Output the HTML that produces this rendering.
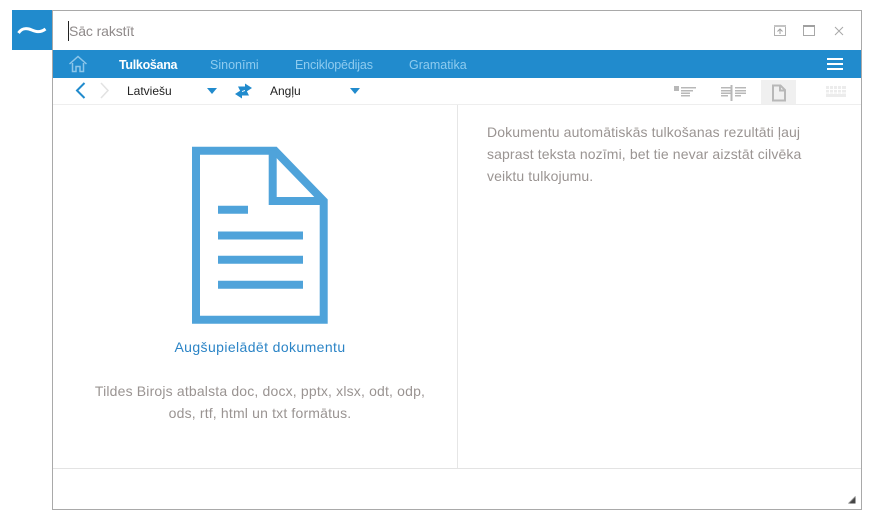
<!DOCTYPE html>
<html>
<head>
<meta charset="utf-8">
<style>
html,body{margin:0;padding:0;background:#fff;}
body{width:884px;height:528px;position:relative;overflow:hidden;font-family:"Liberation Sans",sans-serif;}
.a{position:absolute;white-space:nowrap;}
</style>
</head>
<body>
<div class="a" style="left:12px;top:10px;width:40px;height:40px;background:#218bcd;"></div>
<svg class="a" style="left:12px;top:10px;" width="40" height="40"><path d="M6.500 23C9.500 18.500 13 18 17 19C21 20 26 24.500 33.500 19" fill="none" stroke="#fff" stroke-width="3"/></svg>
<div class="a" style="left:52px;top:10px;width:808px;height:498px;border:1px solid #a9a9a9;"></div>
<div class="a" style="left:68px;top:21px;width:1px;height:20px;background:#222;"></div>
<div class="a" style="left:69px;top:22px;font-size:14px;line-height:18px;color:#8f8a8a;letter-spacing:-.1px;">Sāc rakstīt</div>

<svg class="a" style="left:770px;top:20px;" width="80" height="22" fill="none">
<rect x="4.500" y="5.500" width="11" height="10" stroke="#b0b0b0"/><rect x="4" y="5" width="12" height="2" fill="#c4c4c4"/><path d="M10 14V9M7.500 11.500L10 9L12.500 11.500" stroke="#a0a0a0"/>
<rect x="33.500" y="5.500" width="11" height="10" stroke="#a8a8a8"/><rect x="33" y="5" width="12" height="2" fill="#a0a0a0"/>
<path d="M65 7L73 15M73 7L65 15" stroke="#a8a8a8"/>
</svg>

<div class="a" style="left:53px;top:50px;width:808px;height:28px;background:#218bcd;"></div>
<svg class="a" style="left:68px;top:54px;" width="20" height="20" fill="none" stroke="#8cc6ea" stroke-width="1.500"><path d="M1.500 10L10 2.500L18.500 10M4.500 9V17.500H8V12.500H12V17.500H15.500V9"/></svg>
<div class="a" style="left:119px;top:57px;font-size:12.500px;line-height:16px;color:#fff;font-weight:bold;letter-spacing:-.3px;">Tulkošana</div>
<div class="a" style="left:210px;top:57px;font-size:12.500px;line-height:16px;color:#8ecbef;">Sinonīmi</div>
<div class="a" style="left:295px;top:57px;font-size:12.500px;line-height:16px;color:#8ecbef;letter-spacing:-.15px;">Enciklopēdijas</div>
<div class="a" style="left:409px;top:57px;font-size:12.500px;line-height:16px;color:#8ecbef;">Gramatika</div>
<div class="a" style="left:827px;top:58px;width:16px;height:2px;background:#fff;box-shadow:0 5px 0 #fff,0 10px 0 #fff;"></div>

<svg class="a" style="left:70px;top:80px;" width="40" height="22" fill="none"><path d="M14.500 3L7 10.500L14.500 18" stroke="#218bcd" stroke-width="2"/><path d="M31 3L38 10.500L31 18" stroke="#e2e2e2" stroke-width="1.500"/></svg>
<div class="a" style="left:127px;top:83px;font-size:12px;line-height:16px;color:#222;">Latviešu</div>
<div class="a" style="left:207px;top:88px;width:0;height:0;border-left:5px solid transparent;border-right:5px solid transparent;border-top:6px solid #218bcd;"></div>
<svg class="a" style="left:234px;top:82px;" width="20" height="18" fill="#218bcd"><path d="M4 4.500H11V1.500L18 6L11 10.500V8L6.500 9.500Z"/><path d="M15 13.500H8V16.500L1 12L8 7.500V10L12.500 8.500Z"/></svg>
<div class="a" style="left:270px;top:83px;font-size:12px;line-height:16px;color:#222;">Angļu</div>
<div class="a" style="left:350px;top:88px;width:0;height:0;border-left:5px solid transparent;border-right:5px solid transparent;border-top:6px solid #218bcd;"></div>

<svg class="a" style="left:670px;top:80px;" width="190" height="25">
<g fill="#b8b8b8">
<rect x="4" y="6" width="5" height="5"/><rect x="11" y="7" width="15" height="1.500"/><rect x="11" y="10" width="12" height="1.500"/><rect x="11" y="12.500" width="9" height="1.500"/><rect x="11" y="15" width="9" height="1.500"/>
<rect x="51" y="7" width="11" height="1.500"/><rect x="51" y="10" width="11" height="1.500"/><rect x="51" y="12.500" width="11" height="1.500"/><rect x="51" y="15" width="7" height="1.500"/>
<rect x="60.500" y="5" width="2" height="16"/>
<rect x="65" y="7" width="11" height="1.500"/><rect x="65" y="10" width="11" height="1.500"/><rect x="65" y="12.500" width="11" height="1.500"/><rect x="65" y="15" width="6" height="1.500"/>
</g>
<rect x="91" y="-2" width="35" height="26" fill="#f0f0f0"/>
<path d="M103 5.500H110.500L115 10V20.500H103Z M110 5.500V10.500H115" fill="none" stroke="#b8b8b8" stroke-width="2"/>
<g fill="#ececec"><rect x="156" y="6" width="20" height="11"/><rect x="156" y="15" width="20" height="2"/></g>
<g stroke="#fff" stroke-width="1"><path d="M159.500 6V14M163.500 6V14M167.500 6V14M171.500 6V14M156 9.500H176M156 13H176"/></g>
</svg>

<div class="a" style="left:53px;top:104px;width:808px;height:1px;background:#eee;"></div>
<div class="a" style="left:457px;top:105px;width:1px;height:363px;background:#e6e6e6;"></div>
<div class="a" style="left:53px;top:468px;width:808px;height:1px;background:#e3e3e3;"></div>

<svg class="a" style="left:180px;top:140px;" width="160" height="190" fill="none" stroke="#4fa3da" stroke-width="8">
<path d="M16 10.700H95L143.700 61V179.700H16Z"/>
<path d="M92.700 10.700V61H143.700"/>
<path d="M38 69.700H68M38 95.500H123M38 119.700H123M38 144.700H123"/>
</svg>

<div class="a" style="left:53px;top:338px;width:414px;text-align:center;font-size:14px;line-height:18px;color:#2b84c6;letter-spacing:.4px;">Augšupielādēt dokumentu</div>
<div class="a" style="left:53px;top:380px;width:414px;text-align:center;font-size:14px;line-height:22px;color:#9a9492;letter-spacing:.17px;">Tildes Birojs atbalsta doc, docx, pptx, xlsx, odt, odp,<br>ods, rtf, html un txt formātus.</div>
<div class="a" style="left:487px;top:121px;font-size:14px;line-height:22px;color:#9a9492;letter-spacing:.12px;">Dokumentu automātiskās tulkošanas rezultāti ļauj<br>saprast teksta nozīmi, bet tie nevar aizstāt cilvēka<br>veiktu tulkojumu.</div>

<svg class="a" style="left:846px;top:495px;" width="12" height="10"><path d="M2.500 8.500L9.500 1.500V8.500Z" fill="#444"/><path d="M2.500 8.500L9.500 1.500" stroke="#888"/></svg>
</body>
</html>
